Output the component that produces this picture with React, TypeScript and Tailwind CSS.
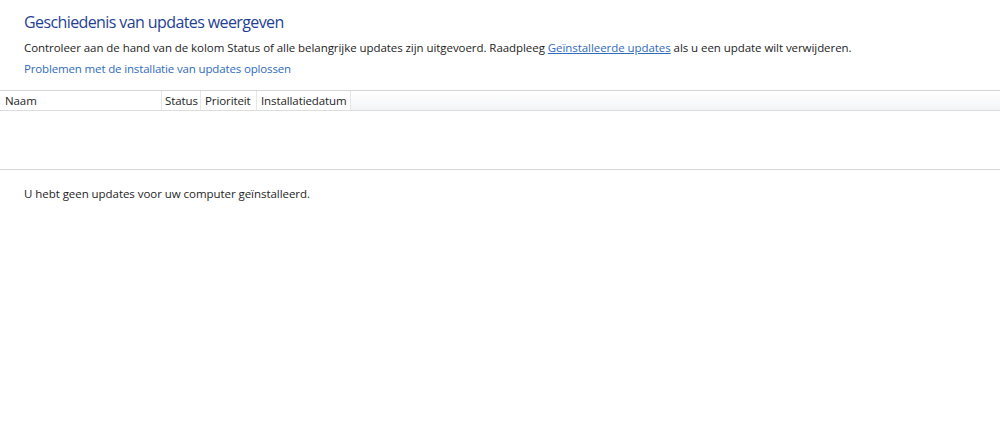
export default function App() {
  const font = { fontFamily: '"Open Sans", "Noto Sans", "DejaVu Sans", sans-serif' };
  return (
    <div className="w-[1000px] h-[428px] bg-white text-[#1e1e1e] overflow-hidden" style={font}>
      <div className="pl-6 pt-[11px]">
        <h1 className="text-[16px] leading-[22px] text-[#1f3f96] tracking-[-0.6px]">
          Geschiedenis van updates weergeven
        </h1>
        <p className="mt-[7px] text-[11.5px] leading-[16px] tracking-[-0.06px]">
          Controleer aan de hand van de kolom Status of alle belangrijke updates zijn uitgevoerd. Raadpleeg{" "}
          <a className="text-[#2f6cbc] underline">Geïnstalleerde updates</a> als u een update wilt verwijderen.
        </p>
        <a className="block mt-[5px] text-[11.5px] leading-[16px] text-[#2f6cbc] tracking-[-0.15px]">
          Problemen met de installatie van updates oplossen
        </a>
      </div>
      <div className="mt-[13px] border-t border-[#d5d5d5]">
        <div className="flex h-[20px] border-b border-[#dcdcdc] bg-gradient-to-b from-white to-[#f3f4f6] text-[11.5px] leading-[19px] tracking-[-0.1px]">
          <div className="w-[162px] pl-[5px] border-r border-[#e6e6e6] bg-white">Naam</div>
          <div className="w-[39px] pl-[3px] border-r border-[#e6e6e6] bg-white">Status</div>
          <div className="w-[56px] pl-[4px] border-r border-[#e6e6e6] bg-white">Prioriteit</div>
          <div className="w-[94px] pl-[4px] border-r border-[#e6e6e6] bg-white">Installatiedatum</div>
          <div className="flex-1" />
        </div>
        <div className="h-[59px] border-b border-[#d5d5d5]" />
        <p className="pl-6 pt-[16px] text-[11.5px] leading-[16px] tracking-[-0.05px]">
          U hebt geen updates voor uw computer geïnstalleerd.
        </p>
      </div>
    </div>
  );
}
